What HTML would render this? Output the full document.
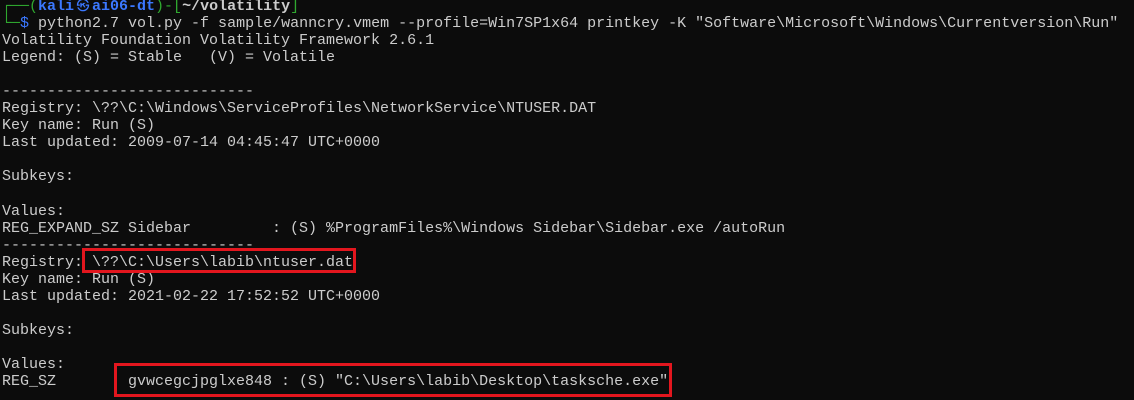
<!DOCTYPE html>
<html><head><style>
html,body{margin:0;padding:0;background:#0c0c0c;width:1134px;height:400px;overflow:hidden}
pre{margin:0;position:absolute;left:2px;top:-2px;font-family:"Liberation Mono","DejaVu Sans Mono",monospace;font-size:15px;line-height:17.05px;color:#cccccc;letter-spacing:0}
.g{color:#2fa82f}.b{color:#3b78ff;font-weight:bold}.w{color:#cccccc;font-weight:bold}.bb{color:#3b78ff}
.sym{display:inline-block;width:18px;text-align:center;font-size:13px;font-weight:normal;overflow:hidden;vertical-align:top}
.box{position:absolute;border:3px solid #e3161e;box-sizing:border-box}
</style></head><body>
<pre><span class="g">┌──(</span><span class="b">kali<span class="sym">㉿</span>ai06-dt</span><span class="g">)-[</span><span class="w">~/volatility</span><span class="g">]</span>
<span class="g">└─</span><span class="bb">$</span> python2.7 vol.py -f sample/wanncry.vmem --profile=Win7SP1x64 printkey -K "Software\Microsoft\Windows\Currentversion\Run"
Volatility Foundation Volatility Framework 2.6.1
Legend: (S) = Stable   (V) = Volatile

----------------------------
Registry: \??\C:\Windows\ServiceProfiles\NetworkService\NTUSER.DAT
Key name: Run (S)
Last updated: 2009-07-14 04:45:47 UTC+0000

Subkeys:

Values:
REG_EXPAND_SZ Sidebar         : (S) %ProgramFiles%\Windows Sidebar\Sidebar.exe /autoRun
----------------------------
Registry: \??\C:\Users\labib\ntuser.dat
Key name: Run (S)
Last updated: 2021-02-22 17:52:52 UTC+0000

Subkeys:

Values:
REG_SZ        gvwcegcjpglxe848 : (S) "C:\Users\labib\Desktop\tasksche.exe"</pre>
<div class="box" style="left:82px;top:248px;width:274px;height:25px"></div>
<div class="box" style="left:114px;top:363px;width:558px;height:34px"></div>
</body></html>
